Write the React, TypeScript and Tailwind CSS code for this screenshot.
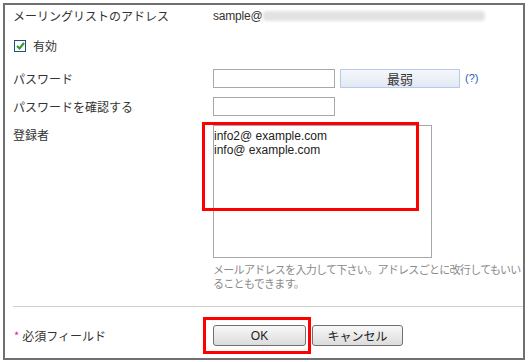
import React from 'react';

const font = { fontFamily: '"Noto Sans CJK JP", "Liberation Sans", sans-serif' };

const Label: React.FC<{ children: React.ReactNode }> = ({ children }) => (
  <div className="w-[208px] shrink-0 pl-[8px] text-[12px] text-[#333]">{children}</div>
);

const App: React.FC = () => {
  return (
    <div className="w-[528px] h-[362px] bg-white p-[3px] overflow-hidden" style={font}>
      <div className="relative w-[522px] h-[357px] border-2 border-[#707070] overflow-hidden">
        {/* Address */}
        <div className="flex items-center h-[22px]">
          <Label>メーリングリストのアドレス</Label>
          <div className="flex items-center text-[12px] text-[#333]">
            <span className="font-['Liberation_Sans'] text-[12px] tracking-[-0.2px]">sample@</span>
            <span className="ml-[1px] w-[222px] h-[10px] bg-[#e2e2e2] blur-[1.5px] rounded-sm" />
          </div>
        </div>

        {/* Enabled */}
        <div className="flex items-center h-[18px] mt-[10px] pl-[9px]">
          <span className="w-[12px] h-[12px] border border-[#1c5180] bg-white flex items-center justify-center">
            <svg width="9" height="8" viewBox="0 0 9 8">
              <path d="M1 4 L3.5 6.5 L8 1" stroke="#2a9a2a" strokeWidth="2" fill="none" />
            </svg>
          </span>
          <span className="ml-[7px] text-[12px] text-[#333]">有効</span>
        </div>

        {/* Password */}
        <div className="flex items-center mt-[14px]">
          <Label>パスワード</Label>
          <div className="w-[122px] h-[19px] border border-[#a8a8a8] bg-white" />
          <div className="ml-[5px] w-[120px] h-[19px] border border-[#b5cbe9] bg-gradient-to-b from-[#f4f7fb] to-[#e3e9f3] flex items-center justify-center text-[13px] text-[#333]">
            最弱
          </div>
          <span className="ml-[5px] text-[11px] text-[#2a5db0] font-['Liberation_Sans']">(?)</span>
        </div>

        {/* Confirm */}
        <div className="flex items-center mt-[9px]">
          <Label>パスワードを確認する</Label>
          <div className="w-[122px] h-[19px] border border-[#a8a8a8] bg-white" />
        </div>

        {/* Members */}
        <div className="flex mt-[9px]">
          <div className="pt-[1px]">
            <Label>登録者</Label>
          </div>
          <div className="flex flex-col">
            <div className="w-[219px] h-[133px] border border-[#a8a8a8] bg-white text-[12px] leading-[14px] text-[#222] font-['Liberation_Sans'] pt-[3px]">
              <div>info2@ example.com</div>
              <div>info@ example.com</div>
            </div>
            <div className="mt-[4px] w-[311px] whitespace-nowrap text-[11px] leading-[14px] tracking-[-0.7px] text-[#8a8a8a]">
              メールアドレスを入力して下さい。アドレスごとに改行してもいい
              <br />
              ることもできます。
            </div>
          </div>
        </div>

        <div className="ml-[8px] mt-[16px] h-px bg-[#cfcfcf]" />

        {/* Footer */}
        <div className="flex items-center mt-[18px]">
          <div className="w-[208px] shrink-0 pl-[9px] flex items-center text-[12px] text-[#333]">
            <span className="text-[#e0208a] text-[11px] mr-[3px]">*</span>
            必須フィールド
          </div>
          <button className="w-[93px] h-[21px] rounded-[3px] border border-[#707070] bg-gradient-to-b from-[#f8f8f8] to-[#dcdcdc] text-[12px] text-[#222] font-['Liberation_Sans']">
            OK
          </button>
          <button className="ml-[6px] w-[91px] h-[21px] rounded-[3px] border border-[#707070] bg-gradient-to-b from-[#f8f8f8] to-[#dcdcdc] text-[12px] text-[#222]">
            キャンセル
          </button>
        </div>

        {/* annotation boxes */}
        <div className="absolute left-[197px] top-[117px] w-[217px] h-[89px] border-[3px] border-[#ff0000]" />
        <div className="absolute left-[198px] top-[312px] w-[108px] h-[37px] border-[3px] border-[#ff0000]" />
      </div>
    </div>
  );
};

export default App;
